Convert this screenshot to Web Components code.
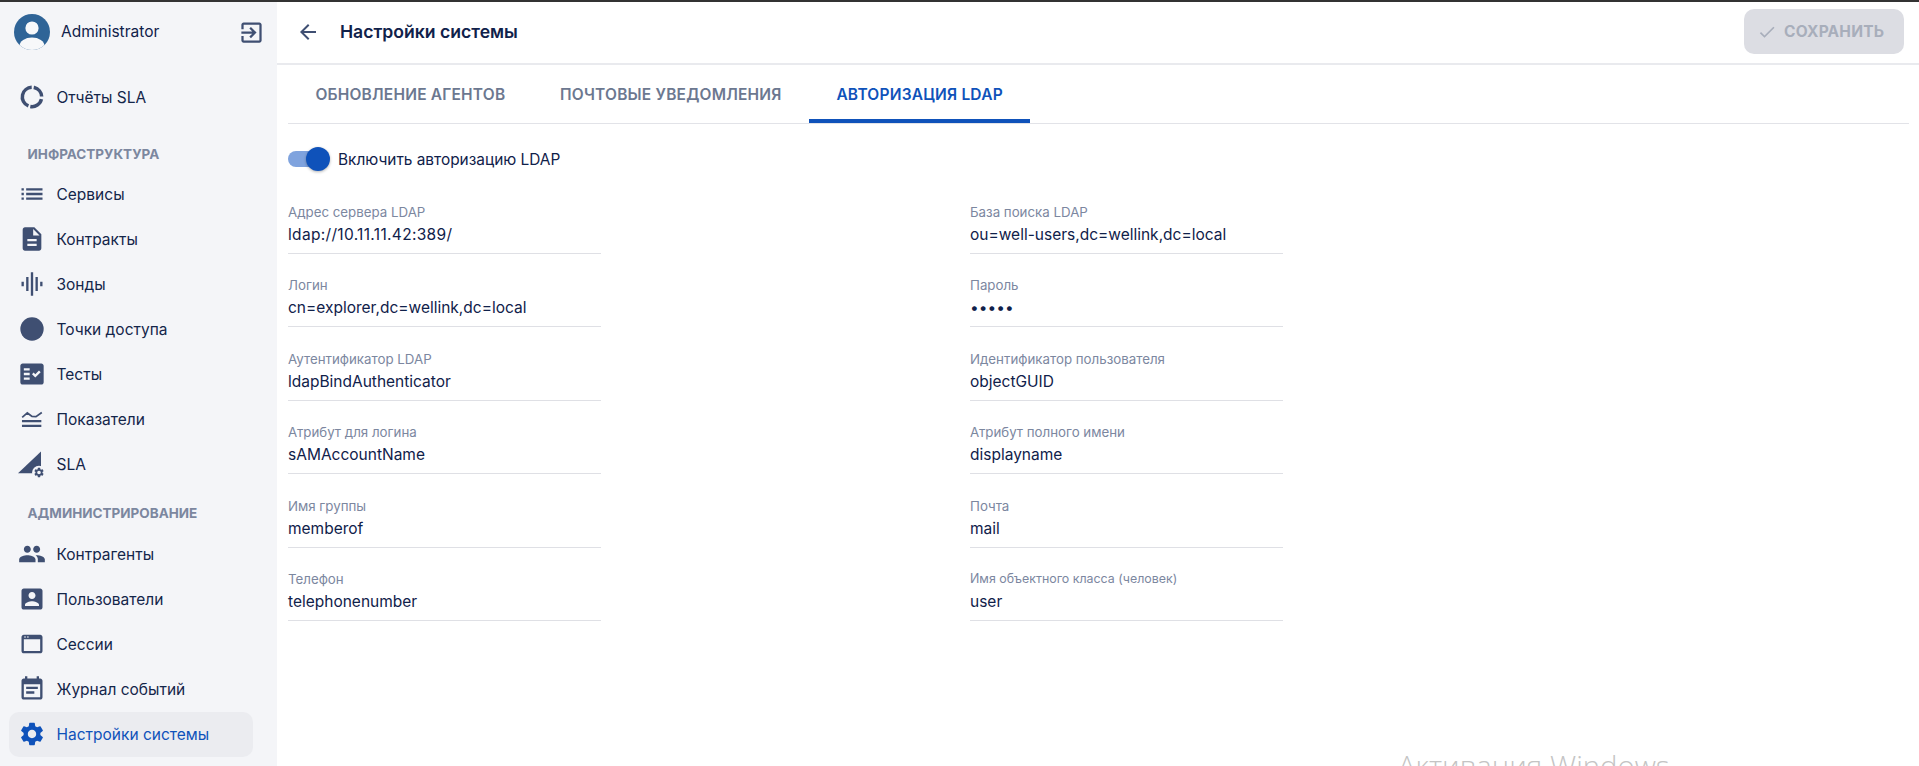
<!DOCTYPE html>
<html lang="ru">
<head>
<meta charset="utf-8">
<title>Настройки системы</title>
<style>
    html, body { margin: 0; height: 100%; overflow: hidden; }
    body {
        font-family: Inter, "Noto Sans", sans-serif;
        color: #10214a;
        background: #fff;
        position: relative;
        border-top: 2px solid #333;
        box-sizing: border-box;
    }
    #app { display: flex; height: 100%; }
    #win-mark {
        position: absolute;
        left: 1398px;
        top: 744px;
        font: 300 29.3px "Open Sans", sans-serif;
        color: #c4c4c4;
        white-space: nowrap;
    }
</style>
</head>
<body>

<div id="app">
    <side-bar>
        <user-box slot="user" name="Administrator"></user-box>

        <nav-item label="Отчёты SLA" icon="reports"></nav-item>
        <nav-group title="Инфраструктура" first></nav-group>
        <nav-item label="Сервисы" icon="list"></nav-item>
        <nav-item label="Контракты" icon="doc"></nav-item>
        <nav-item label="Зонды" icon="probe"></nav-item>
        <nav-item label="Точки доступа" icon="dot"></nav-item>
        <nav-item label="Тесты" icon="check"></nav-item>
        <nav-item label="Показатели" icon="metric"></nav-item>
        <nav-item label="SLA" icon="sla"></nav-item>
        <nav-group title="Администрирование"></nav-group>
        <nav-item label="Контрагенты" icon="group"></nav-item>
        <nav-item label="Пользователи" icon="user"></nav-item>
        <nav-item label="Сессии" icon="web"></nav-item>
        <nav-item label="Журнал событий" icon="event"></nav-item>
        <nav-item label="Настройки системы" icon="gear" active></nav-item>
    </side-bar>

    <settings-page>
        <page-header title="Настройки системы"></page-header>
        <tab-bar>
            <tab-item>Обновление агентов</tab-item>
            <tab-item>Почтовые уведомления</tab-item>
            <tab-item active>Авторизация LDAP</tab-item>
        </tab-bar>
        <ldap-toggle>Включить авторизацию LDAP</ldap-toggle>
        <field-grid>
            <form-field label="Адрес сервера LDAP" value="ldap://10.11.11.42:389/" style="--value-spacing: .32px"></form-field>
            <form-field label="База поиска LDAP" value="ou=well-users,dc=wellink,dc=local"></form-field>
            <form-field label="Логин" value="cn=explorer,dc=wellink,dc=local"></form-field>
            <form-field label="Пароль" value="•••••"></form-field>
            <form-field label="Аутентификатор LDAP" value="ldapBindAuthenticator"></form-field>
            <form-field label="Идентификатор пользователя" value="objectGUID"></form-field>
            <form-field label="Атрибут для логина" value="sAMAccountName"></form-field>
            <form-field label="Атрибут полного имени" value="displayname"></form-field>
            <form-field label="Имя группы" value="memberof"></form-field>
            <form-field label="Почта" value="mail"></form-field>
            <form-field label="Телефон" value="telephonenumber"></form-field>
            <form-field label="Имя объектного класса (человек)" value="user" compact></form-field>
        </field-grid>
    </settings-page>
</div>

<div id="win-mark">Активация Windows</div>

<script>
const GEAR = "M19.14 12.94c.04-.3.06-.61.06-.94 0-.32-.02-.64-.07-.94l2.03-1.58c.18-.14.23-.41.12-.61l-1.92-3.32c-.12-.22-.37-.29-.59-.22l-2.39.96c-.5-.38-1.03-.7-1.62-.94l-.36-2.54c-.04-.24-.24-.41-.48-.41h-3.84c-.24 0-.43.17-.47.41l-.36 2.54c-.59.24-1.13.57-1.62.94l-2.39-.96c-.22-.08-.47 0-.59.22L2.74 8.87c-.12.21-.08.47.12.61l2.03 1.58c-.05.3-.09.63-.09.94s.02.64.07.94l-2.03 1.58c-.18.14-.23.41-.12.61l1.92 3.32c.12.22.37.29.59.22l2.39-.96c.5.38 1.03.7 1.62.94l.36 2.54c.05.24.24.41.48.41h3.84c.24 0 .44-.17.47-.41l.36-2.54c.59-.24 1.13-.56 1.62-.94l2.39.96c.22.08.47 0 .59-.22l1.92-3.32c.12-.22.07-.47-.12-.61l-2.01-1.58zM12 15.6c-1.98 0-3.6-1.62-3.6-3.6s1.62-3.6 3.6-3.6 3.6 1.62 3.6 3.6-1.62 3.6-3.6 3.6z";

const ICONS = {
    reports: `<circle cx="12" cy="12" r="8.3" fill="none" stroke="currentColor" stroke-width="3" pathLength="360" stroke-dasharray="87 12 156 12 77 16" transform="rotate(13 12 12)"/>`,
    list: `<path d="M3 13h2v-2H3v2zm0 4h2v-2H3v2zm0-8h2V7H3v2zm4 4h14v-2H7v2zm0 4h14v-2H7v2zM7 7v2h14V7H7z"/>`,
    doc: `<path d="M14 2H6c-1.1 0-1.99.9-1.99 2L4 20c0 1.1.89 2 1.99 2H18c1.1 0 2-.9 2-2V8l-6-6zm2 16H8v-2h8v2zm0-4H8v-2h8v2zm-3-5V3.5L18.5 9H13z"/>`,
    probe: `<path d="M7 18h2V6H7v12zm4 4h2V2h-2v20zm-8-8h2v-4H3v4zm12 4h2V6h-2v12zm4-8v4h2v-4h-2z"/>`,
    dot: `<circle cx="12" cy="12" r="10"/>`,
    check: `<path d="M20 3H4c-1.1 0-2 .9-2 2v14c0 1.1.9 2 2 2h16c1.1 0 2-.9 2-2V5c0-1.1-.9-2-2-2zM10 17H5v-2h5v2zm0-4H5v-2h5v2zm0-4H5V7h5v2zm4.82 6L12 12.16l1.41-1.41 1.41 1.42L17.99 9l1.42 1.42L14.82 15z"/>`,
    metric: `<path d="M3.4 12.9h16.6v1.8H3.4zM3.4 17h16.6v1.8H3.4z"/><path d="M3.6 10.6 8 6.8l4 3 3.4.2 5-3.6" fill="none" stroke="currentColor" stroke-width="1.5"/>`,
    sla: `<path d="M0 20 19.7 1.3V20z"/><circle cx="18" cy="19.3" r="5.9" fill="#f4f5f8"/><path transform="translate(12.96 14.26) scale(.42)" d="${GEAR}"/>`,
    group: `<path d="M16 11c1.66 0 2.99-1.34 2.99-3S17.66 5 16 5c-1.66 0-3 1.34-3 3s1.34 3 3 3zm-8 0c1.66 0 2.99-1.34 2.99-3S9.66 5 8 5C6.34 5 5 6.34 5 8s1.34 3 3 3zm0 2c-2.33 0-7 1.17-7 3.5V19h14v-2.5c0-2.33-4.67-3.5-7-3.5zm8 0c-.29 0-.62.02-.97.05 1.16.84 1.97 1.97 1.97 3.45V19h6v-2.5c0-2.33-4.67-3.5-7-3.5z"/>`,
    user: `<path d="M3 5v14c0 1.1.89 2 2 2h14c1.1 0 2-.9 2-2V5c0-1.1-.9-2-2-2H5c-1.11 0-2 .9-2 2zm12 4c0 1.66-1.34 3-3 3s-3-1.34-3-3 1.34-3 3-3 3 1.34 3 3zm-9 8c0-2 4-3.1 6-3.1s6 1.1 6 3.1v1H6v-1z"/>`,
    web: `<path d="M19 4H5c-1.11 0-2 .9-2 2v12c0 1.1.89 2 2 2h14c1.1 0 2-.9 2-2V6c0-1.1-.89-2-2-2zm0 14H5V8h14v10z"/><circle cx="6" cy="6" r=".7" fill="#f4f5f8"/><circle cx="8.5" cy="6" r=".7" fill="#f4f5f8"/>`,
    event: `<path d="M17 10H7v2h10v-2zm2-7h-1V1h-2v2H8V1H6v2H5c-1.11 0-1.99.9-1.99 2L3 19c0 1.1.89 2 2 2h14c1.1 0 2-.9 2-2V5c0-1.1-.9-2-2-2zm0 16H5V8h14v11zm-5-5H7v2h7v-2z"/>`,
    gear: `<path d="${GEAR}"/>`
};

class SideBar extends HTMLElement {
    constructor() {
        super();
        this.attachShadow({ mode: "open" }).innerHTML = `
            <style>
                :host {
                    display: block;
                    flex: 0 0 277px;
                    background: #f4f5f8;
                    box-sizing: border-box;
                    padding: 0 24px 0 9px;
                }
            </style>
            <slot name="user"></slot>
            <slot></slot>
        `;
    }
}

class UserBox extends HTMLElement {
    constructor() {
        super();
        this.attachShadow({ mode: "open" }).innerHTML = `
            <style>
                :host {
                    display: flex;
                    align-items: center;
                    height: 60px;
                    margin: 0 -12px 12.5px 5px;
                    font-size: 15.5px;
                    color: #10214a;
                }
                #name { margin-left: 11px; flex: 1; position: relative; top: -1px; }
                svg { display: block; }
                #exit { width: 27px; height: 27px; fill: #3f4f72; }
            </style>
            <svg width="36" height="36" viewBox="0 0 36 36">
                <defs><clipPath id="c"><circle cx="18" cy="18" r="18"/></clipPath></defs>
                <circle cx="18" cy="18" r="18" fill="#2f6497"/>
                <g clip-path="url(#c)" fill="#f7f8fa">
                    <circle cx="18" cy="14" r="6.6"/>
                    <ellipse cx="18" cy="32" rx="12.5" ry="8.5"/>
                </g>
            </svg>
            <span id="name"></span>
            <svg id="exit" viewBox="0 0 24 24"><path d="M10.09 15.59L11.5 17l5-5-5-5-1.41 1.41L12.67 11H3v2h9.67l-2.58 2.59zM19 3H5c-1.11 0-2 .9-2 2v4h2V5h14v14H5v-4H3v4c0 1.1.89 2 2 2h14c1.1 0 2-.9 2-2V5c0-1.1-.9-2-2-2z"/></svg>
        `;
        this.shadowRoot.querySelector("#name").textContent = this.getAttribute("name");
    }
}

class NavGroup extends HTMLElement {
    constructor() {
        super();
        this.attachShadow({ mode: "open" }).innerHTML = `
            <style>
                :host {
                    display: block;
                    box-sizing: border-box;
                    height: 45px;
                    padding: 18.5px 0 0 18.5px;
                    font-size: 13.5px;
                    line-height: 16px;
                    font-weight: 700;
                    color: #7c879f;
                    text-transform: uppercase;
                }
                :host([first]) { height: 52px; padding-top: 26px; }
            </style>
            <span></span>
        `;
        this.shadowRoot.querySelector("span").textContent = this.getAttribute("title");
        this.removeAttribute("title");
    }
}

class NavItem extends HTMLElement {
    constructor() {
        super();
        this.attachShadow({ mode: "open" }).innerHTML = `
            <style>
                :host {
                    display: flex;
                    align-items: center;
                    height: 45px;
                    border-radius: 10px;
                    box-sizing: border-box;
                    padding-left: 9px;
                    font-size: 15.5px;
                    color: #14264a;
                }
                :host([active]) { background: #ebecf0; color: #0f52ba; }
                svg { width: 28px; height: 28px; fill: #3f4f72; margin-right: 10.5px; flex: none; color: #3f4f72; overflow: visible; }
                :host([active]) svg { fill: #0f52ba; }
            </style>
            <svg viewBox="0 0 24 24"></svg>
            <span></span>
        `;
        this.shadowRoot.querySelector("svg").innerHTML = ICONS[this.getAttribute("icon")];
        this.shadowRoot.querySelector("span").textContent = this.getAttribute("label");
    }
}

class SettingsPage extends HTMLElement {
    constructor() {
        super();
        this.attachShadow({ mode: "open" }).innerHTML = `
            <style>
                :host { display: block; flex: 1; min-width: 0; background: #fff; }
            </style>
            <slot></slot>
        `;
    }
}

class PageHeader extends HTMLElement {
    constructor() {
        super();
        this.attachShadow({ mode: "open" }).innerHTML = `
            <style>
                :host {
                    display: flex;
                    align-items: center;
                    height: 63px;
                    box-sizing: border-box;
                    border-bottom: 2px solid #e9eaee;
                    padding: 0 15px 2px 19px;
                }
                svg { width: 24px; height: 24px; fill: #3f4f72; flex: none; }
                h1 { margin: 0 0 0 20px; flex: 1; font-size: 17.6px; font-weight: 600; color: #10214a; }
                button {
                    display: flex;
                    align-items: center;
                    gap: 7px;
                    width: 160px;
                    height: 45px;
                    padding: 0 0 0 13px;
                    border: 0;
                    border-radius: 10px;
                    background: #dcdde3;
                    color: #a8aebb;
                    font: 700 15.5px Inter, sans-serif;
                    letter-spacing: .2px;
                }
                button svg { width: 20px; height: 20px; fill: #a8aebb; }
            </style>
            <svg viewBox="0 0 24 24"><path d="M20 11H7.83l5.59-5.59L12 4l-8 8 8 8 1.41-1.41L7.83 13H20v-2z"/></svg>
            <h1></h1>
            <button disabled>
                <svg viewBox="0 0 24 24"><path d="M9 16.17 4.83 12l-1.42 1.41L9 19 21 7l-1.41-1.41z"/></svg>
                СОХРАНИТЬ
            </button>
        `;
        this.shadowRoot.querySelector("h1").textContent = this.getAttribute("title");
        this.removeAttribute("title");
    }
}

class TabBar extends HTMLElement {
    constructor() {
        super();
        this.attachShadow({ mode: "open" }).innerHTML = `
            <style>
                :host {
                    display: flex;
                    height: 59px;
                    box-sizing: border-box;
                    margin: 0 10px 0 11px;
                    border-bottom: 1px solid #e2e3e8;
                }
            </style>
            <slot></slot>
        `;
    }
}

class TabItem extends HTMLElement {
    constructor() {
        super();
        this.attachShadow({ mode: "open" }).innerHTML = `
            <style>
                :host {
                    display: flex;
                    align-items: center;
                    box-sizing: border-box;
                    padding: 4px 27.4px 0;
                    font-size: 15.5px;
                    font-weight: 600;
                    letter-spacing: .2px;
                    text-transform: uppercase;
                    color: #6c7890;
                    border-bottom: 4px solid transparent;
                }
                :host([active]) { color: #0f52ba; border-bottom-color: #0f52ba; }
            </style>
            <slot></slot>
        `;
    }
}

class LdapToggle extends HTMLElement {
    constructor() {
        super();
        this.attachShadow({ mode: "open" }).innerHTML = `
            <style>
                :host {
                    display: flex;
                    align-items: center;
                    height: 24px;
                    margin: 23px 0 0 11px;
                    font-size: 15.4px;
                    color: #10214a;
                }
                #track {
                    position: relative;
                    width: 38px;
                    height: 16px;
                    border-radius: 8px;
                    background: #7fa3de;
                    margin-right: 12px;
                }
                #thumb {
                    position: absolute;
                    right: -4px;
                    top: -4px;
                    width: 24px;
                    height: 24px;
                    border-radius: 50%;
                    background: #0f52ba;
                    box-shadow: 0 1px 3px rgba(0,0,0,.3);
                }
            </style>
            <div id="track"><div id="thumb"></div></div>
            <slot></slot>
        `;
    }
}

class FieldGrid extends HTMLElement {
    constructor() {
        super();
        this.attachShadow({ mode: "open" }).innerHTML = `
            <style>
                :host {
                    display: grid;
                    grid-template-columns: 313px 313px;
                    column-gap: 369px;
                    row-gap: 18.5px;
                    margin: 27.6px 0 0 11px;
                }
            </style>
            <slot></slot>
        `;
    }
}

class FormField extends HTMLElement {
    constructor() {
        super();
        this.attachShadow({ mode: "open" }).innerHTML = `
            <style>
                :host {
                    display: block;
                    height: 55px;
                    box-sizing: border-box;
                    padding-top: 4px;
                    border-bottom: 1px solid #dfe0e5;
                }
                #label { font-size: 13.3px; line-height: 18px; color: #7c879f; }
                :host([compact]) #label { font-size: 12.4px; }
                #value { font-size: 15.5px; line-height: 24px; color: #10214a; margin-top: 2px; letter-spacing: var(--value-spacing, 0); }
            </style>
            <div id="label"></div>
            <div id="value"></div>
        `;
        this.shadowRoot.querySelector("#label").textContent = this.getAttribute("label");
        this.shadowRoot.querySelector("#value").textContent = this.getAttribute("value");
    }
}

customElements.define("side-bar", SideBar);
customElements.define("user-box", UserBox);
customElements.define("nav-group", NavGroup);
customElements.define("nav-item", NavItem);
customElements.define("settings-page", SettingsPage);
customElements.define("page-header", PageHeader);
customElements.define("tab-bar", TabBar);
customElements.define("tab-item", TabItem);
customElements.define("ldap-toggle", LdapToggle);
customElements.define("field-grid", FieldGrid);
customElements.define("form-field", FormField);
</script>
</body>
</html>
